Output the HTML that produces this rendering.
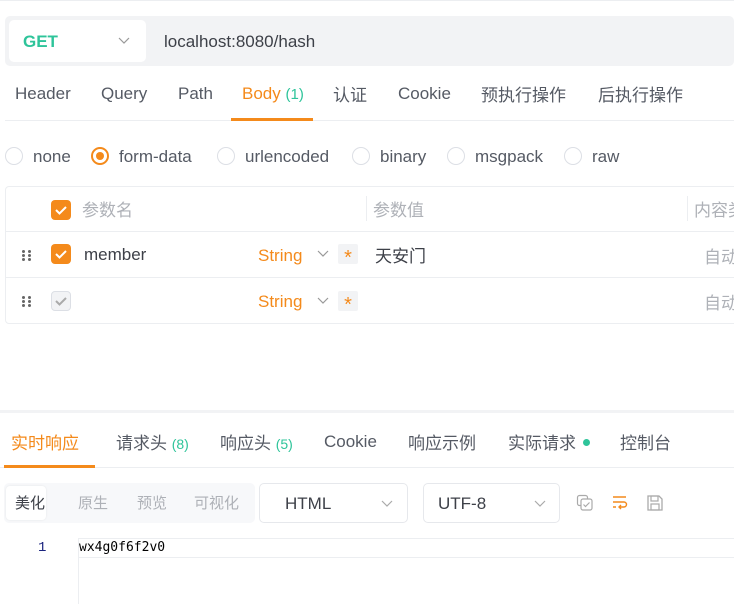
<!DOCTYPE html>
<html><head><meta charset="utf-8"><style>
*{box-sizing:border-box;margin:0;padding:0}
body{width:734px;height:604px;overflow:hidden;background:#fff;font-family:"Liberation Sans","Noto Sans CJK SC",sans-serif;color:#3d4048;position:relative}
.a{position:absolute;white-space:nowrap}
.t{font-size:17px;color:#555a64}
.radio{position:absolute;width:18px;height:18px;border:1px solid #dcdfe5;border-radius:50%;background:#fff}
.cb{position:absolute;width:20px;height:20px;border-radius:4px;background:#f48a1b}
.cb svg{position:absolute;left:3px;top:4px}
.dots{position:absolute;width:10px;height:12px}
.dots i{position:absolute;width:3px;height:3px;background:#666;border-radius:50%}
.sel{position:absolute;border:1px solid #e6e8ec;border-radius:5px;background:#fff;font-size:17px;color:#3d4048}
.str{color:#f48a1b;font-size:17px}
.star{position:absolute;width:20px;height:20px;background:#f2f3f5;color:#f48a1b;font-size:20px;text-align:center;line-height:28px;border-radius:2px;overflow:hidden}
.grey{color:#aeb1b7}
.cj{margin-top:-3px}
</style></head><body>
<div class="a" style="left:0;top:0;width:734px;height:1px;background:#eceef1"></div>
<div class="a" style="left:5px;top:16px;width:729px;height:50px;background:#f2f3f5;border-radius:5px"></div>
<div class="a" style="left:9px;top:20px;width:137px;height:42px;background:#fff;border-radius:5px"></div>
<div class="a" style="left:23px;top:32px;font-size:17px;font-weight:bold;color:#2ec49a">GET</div>
<svg class="a" style="left:118px;top:37px" width="12" height="8"><path d="M1 1l5 5 5-5" stroke="#999" fill="none" stroke-width="1.2"/></svg>
<div class="a" style="left:164px;top:32px;font-size:17px;color:#3d4048">localhost:8080/hash</div>

<div class="a t" style="left:15px;top:84px">Header</div>
<div class="a t" style="left:101px;top:84px">Query</div>
<div class="a t" style="left:178px;top:84px">Path</div>
<div class="a t" style="left:242px;top:84px;color:#f48a1b">Body <span style="color:#2ec49a;font-size:15px">(1)</span></div>
<div class="a t cj" style="left:333px;top:84px">认证</div>
<div class="a t" style="left:398px;top:84px">Cookie</div>
<div class="a t cj" style="left:481px;top:84px">预执行操作</div>
<div class="a t cj" style="left:598px;top:84px">后执行操作</div>
<div class="a" style="left:5px;top:120px;width:729px;height:1px;background:#eceef1"></div>
<div class="a" style="left:231px;top:118px;width:82px;height:3px;background:#f48a1b"></div>

<div class="radio" style="left:5px;top:147px"></div><div class="a t" style="left:33px;top:147px">none</div>
<div class="radio" style="left:91px;top:147px;border:2px solid #f48a1b"><div style="position:absolute;left:3px;top:3px;width:8px;height:8px;border-radius:50%;background:#f48a1b"></div></div><div class="a t" style="left:119px;top:147px">form-data</div>
<div class="radio" style="left:217px;top:147px"></div><div class="a t" style="left:245px;top:147px">urlencoded</div>
<div class="radio" style="left:352px;top:147px"></div><div class="a t" style="left:380px;top:147px">binary</div>
<div class="radio" style="left:447px;top:147px"></div><div class="a t" style="left:475px;top:147px">msgpack</div>
<div class="radio" style="left:564px;top:147px"></div><div class="a t" style="left:592px;top:147px">raw</div>

<div class="a" style="left:5px;top:186px;width:740px;height:138px;border:1px solid #eceef1;border-radius:4px"></div>
<div class="a" style="left:5px;top:231px;width:729px;height:1px;background:#eceef1"></div>
<div class="a" style="left:5px;top:277px;width:729px;height:1px;background:#eceef1"></div>
<div class="a" style="left:366px;top:196px;width:1px;height:25px;background:#eceef1"></div>
<div class="a" style="left:687px;top:196px;width:1px;height:25px;background:#eceef1"></div>
<div class="cb" style="left:51px;top:200px"><svg width="14" height="12"><path d="M2 6l3.5 3.5L12 3" stroke="#fff" stroke-width="2" fill="none"/></svg></div>
<div class="a t grey cj" style="left:82px;top:199px">参数名</div>
<div class="a t grey cj" style="left:373px;top:199px">参数值</div>
<div class="a t grey cj" style="left:694px;top:199px">内容类</div>

<div class="dots" style="left:22px;top:250px"><i style="left:0;top:0"></i><i style="left:6px;top:0"></i><i style="left:0;top:4px"></i><i style="left:6px;top:4px"></i><i style="left:0;top:8px"></i><i style="left:6px;top:8px"></i></div>
<div class="cb" style="left:51px;top:244px"><svg width="14" height="12"><path d="M2 6l3.5 3.5L12 3" stroke="#fff" stroke-width="2" fill="none"/></svg></div>
<div class="a t" style="left:84px;top:245px;color:#3d4048">member</div>
<div class="a str" style="left:258px;top:246px">String</div>
<svg class="a" style="left:317px;top:250px" width="12" height="8"><path d="M1 1l5 5 5-5" stroke="#999" fill="none" stroke-width="1.2"/></svg>
<div class="star" style="left:338px;top:244px">*</div>
<div class="a t cj" style="left:375px;top:245px;color:#3d4048">天安门</div>
<div class="a t grey cj" style="left:704px;top:246px">自动</div>

<div class="dots" style="left:22px;top:296px"><i style="left:0;top:0"></i><i style="left:6px;top:0"></i><i style="left:0;top:4px"></i><i style="left:6px;top:4px"></i><i style="left:0;top:8px"></i><i style="left:6px;top:8px"></i></div>
<div class="cb" style="left:51px;top:291px;background:#f2f3f5;border:1px solid #dcdfe5"><svg width="14" height="12" style="left:2px;top:3px"><path d="M2 6l3.5 3.5L12 3" stroke="#aaa" stroke-width="2" fill="none"/></svg></div>
<div class="a str" style="left:258px;top:292px">String</div>
<svg class="a" style="left:317px;top:297px" width="12" height="8"><path d="M1 1l5 5 5-5" stroke="#999" fill="none" stroke-width="1.2"/></svg>
<div class="star" style="left:338px;top:291px">*</div>
<div class="a t grey cj" style="left:704px;top:292px">自动</div>

<div class="a" style="left:0;top:410px;width:734px;height:3px;background:#f2f3f5"></div>
<div class="a t cj" style="left:11px;top:432px;color:#f48a1b">实时响应</div>
<div class="a t cj" style="left:116px;top:432px">请求头 <span style="color:#2ec49a;font-size:14px">(8)</span></div>
<div class="a t cj" style="left:220px;top:432px">响应头 <span style="color:#2ec49a;font-size:14px">(5)</span></div>
<div class="a t" style="left:324px;top:432px">Cookie</div>
<div class="a t cj" style="left:408px;top:432px">响应示例</div>
<div class="a t cj" style="left:508px;top:432px">实际请求</div>
<div class="a" style="left:583px;top:439px;width:7px;height:7px;border-radius:50%;background:#2ec49a"></div>
<div class="a t cj" style="left:620px;top:432px">控制台</div>
<div class="a" style="left:0;top:467px;width:734px;height:1px;background:#eceef1"></div>
<div class="a" style="left:4px;top:465px;width:91px;height:3px;background:#f48a1b"></div>

<div class="a" style="left:4px;top:483px;width:251px;height:40px;background:#f7f8fa;border-radius:5px"></div>
<div class="a" style="left:6px;top:486px;width:40px;height:34px;background:#fff;border-radius:4px;box-shadow:0 0 2px rgba(0,0,0,.08)"></div>
<div class="a" style="left:15px;top:492px;font-size:15px;color:#3d4048">美化</div>
<div class="a grey" style="left:78px;top:492px;font-size:15px">原生</div>
<div class="a grey" style="left:137px;top:492px;font-size:15px">预览</div>
<div class="a grey" style="left:194px;top:492px;font-size:15px">可视化</div>
<div class="sel" style="left:259px;top:483px;width:149px;height:40px"><span style="position:absolute;left:25px;top:10px">HTML</span><svg style="position:absolute;left:121px;top:16px" width="12" height="8"><path d="M1 1l5 5 5-5" stroke="#aaa" fill="none" stroke-width="1.2"/></svg></div>
<div class="sel" style="left:423px;top:483px;width:137px;height:40px"><span style="position:absolute;left:14px;top:10px">UTF-8</span><svg style="position:absolute;left:110px;top:16px" width="12" height="8"><path d="M1 1l5 5 5-5" stroke="#aaa" fill="none" stroke-width="1.2"/></svg></div>
<svg class="a" style="left:576px;top:494px" width="18" height="18"><rect x="1.5" y="1.5" width="10" height="10" rx="2" fill="none" stroke="#aaa" stroke-width="1.2"/><rect x="5" y="5" width="11" height="11" rx="2" fill="#fff" stroke="#aaa" stroke-width="1.2"/><path d="M7.5 10.5l2 2 4-4" stroke="#aaa" fill="none" stroke-width="1.2"/></svg>
<svg class="a" style="left:611px;top:494px" width="18" height="18"><path d="M2 3h13M2 8h11a2.5 2.5 0 010 5H8M10 11l-2 2 2 2M2 13h3" stroke="#f48a1b" fill="none" stroke-width="1.4"/></svg>
<svg class="a" style="left:646px;top:494px" width="18" height="18"><path d="M2 2h11l3 3v11H2z" fill="none" stroke="#aaa" stroke-width="1.3"/><rect x="5" y="2" width="7" height="5" fill="none" stroke="#aaa" stroke-width="1.2"/><rect x="5" y="10" width="8" height="6" fill="none" stroke="#aaa" stroke-width="1.2"/></svg>

<div class="a" style="left:78px;top:538px;width:656px;height:20px;border-top:1px solid #eceef1;border-bottom:1px solid #eceef1"></div>
<div class="a" style="left:78px;top:538px;width:1px;height:66px;background:#eceef1"></div>
<div class="a" style="left:38px;top:540px;font-family:'Liberation Mono',monospace;font-size:14px;color:#1a237e">1</div>
<div class="a" style="left:79px;top:540px;font-family:'DejaVu Sans Mono','Liberation Mono',monospace;font-size:13px;color:#000">wx4g0f6f2v0</div>
</body></html>
